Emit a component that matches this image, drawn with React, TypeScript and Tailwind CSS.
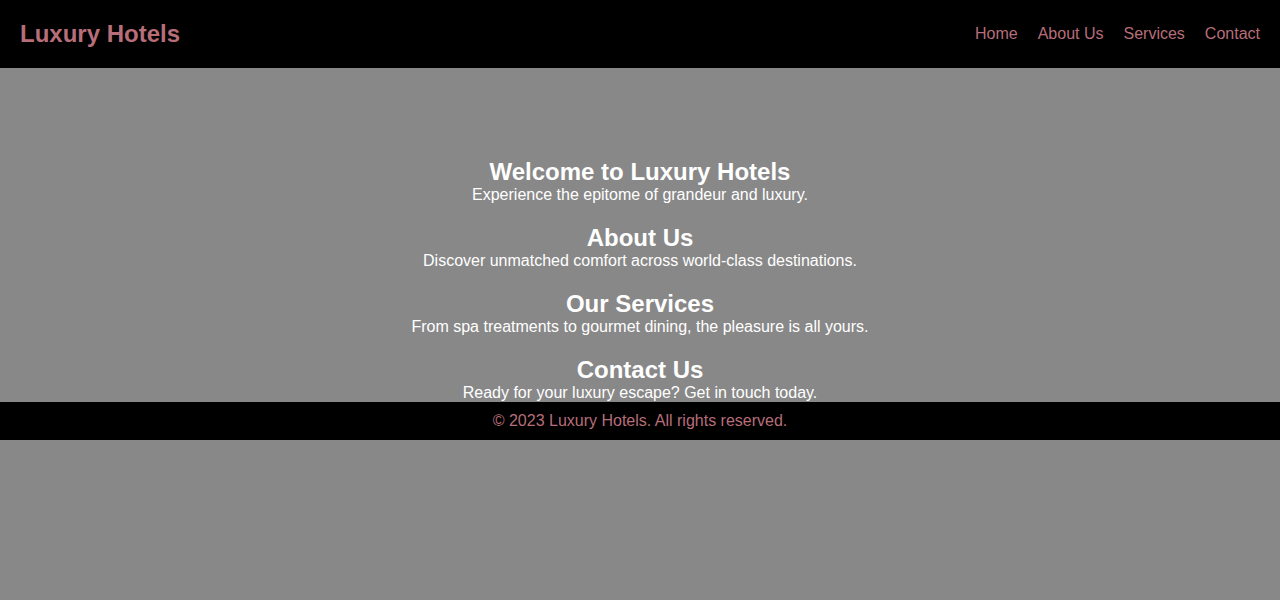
const sections = [
  { title: 'Welcome to Luxury Hotels', text: 'Experience the epitome of grandeur and luxury.' },
  { title: 'About Us', text: 'Discover unmatched comfort across world-class destinations.' },
  { title: 'Our Services', text: 'From spa treatments to gourmet dining, the pleasure is all yours.' },
  { title: 'Contact Us', text: 'Ready for your luxury escape? Get in touch today.' },
];

export default function App() {
  return (
    <div className="min-h-screen bg-[#888888] font-['Liberation_Sans',Arial,sans-serif] leading-[normal]">
      <header className="h-[68px] bg-black flex items-center justify-between px-5">
        <h1 className="text-2xl font-bold leading-[normal] text-[#b76e79]">Luxury Hotels</h1>
        <nav className="flex gap-5 text-base leading-[normal] text-[#b76e79]">
          <a href="#">Home</a>
          <a href="#">About Us</a>
          <a href="#">Services</a>
          <a href="#">Contact</a>
        </nav>
      </header>
      <main className="pt-[90px] flex flex-col gap-5 text-center text-white">
        {sections.map((s) => (
          <section key={s.title}>
            <h2 className="text-2xl font-bold leading-[normal]">{s.title}</h2>
            <p className="text-base leading-[normal]">{s.text}</p>
          </section>
        ))}
      </main>
      <footer className="h-[38px] bg-black flex items-center justify-center text-[#b76e79] leading-[normal]">
        <p>© 2023 Luxury Hotels. All rights reserved.</p>
      </footer>
    </div>
  );
}
